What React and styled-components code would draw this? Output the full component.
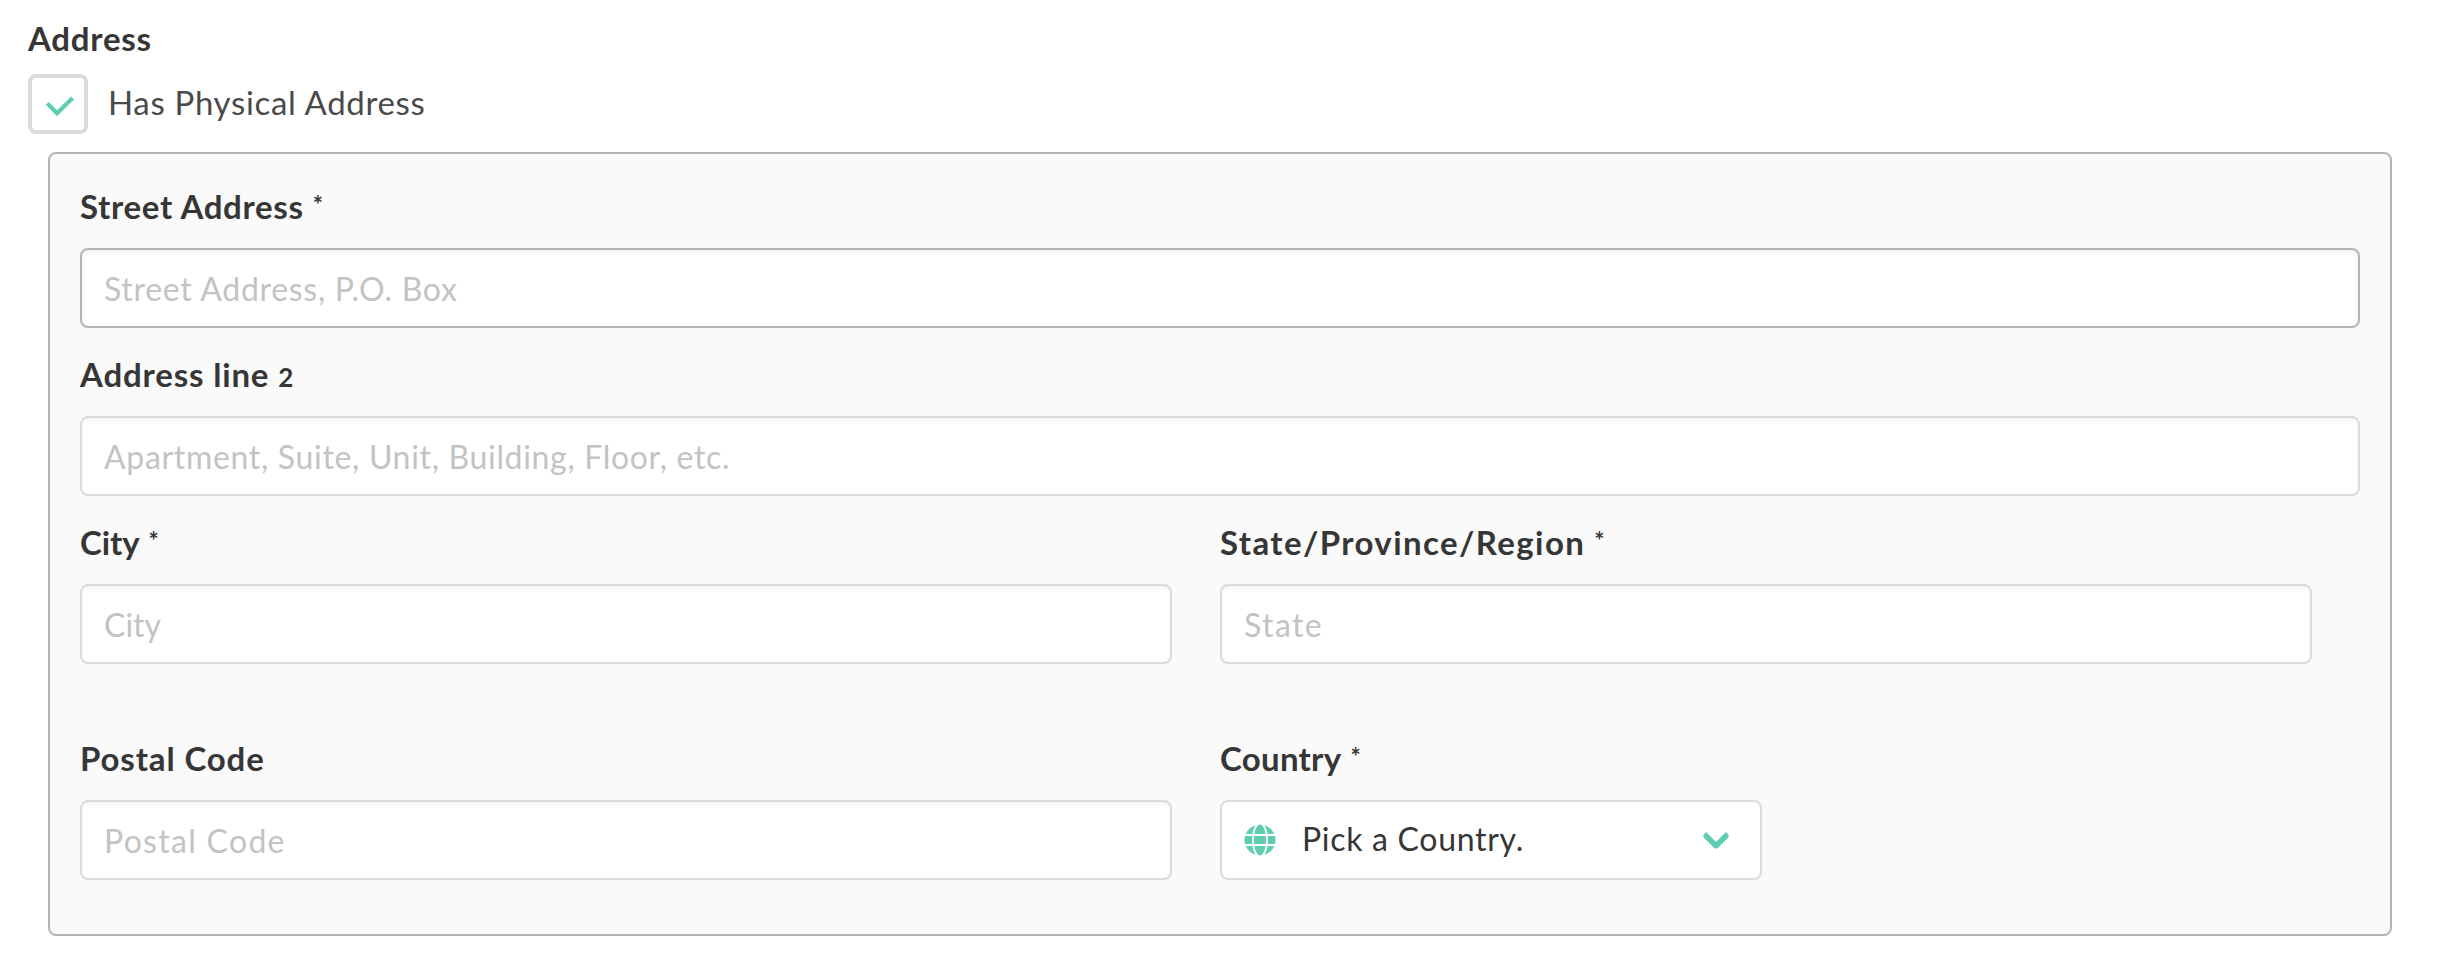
import React from "react";
import styled, { createGlobalStyle } from "styled-components";
import { FaGlobe } from "react-icons/fa";

const GlobalStyle = createGlobalStyle`
  *, *::before, *::after { box-sizing: border-box; }
  body {
    margin: 0;
    background: #fff;
    color: #4a4a4a;
    font-family: Lato, "Open Sans", sans-serif;
    font-size: 32px;
  }
`;

const Form = styled.form`
  padding: 16px 48px 0 28px;
`;

const Label = styled.label`
  display: block;
  height: 48px;
  font-size: 33px;
  line-height: 45px;
  font-weight: 700;
  color: #363636;
  white-space: nowrap;
  letter-spacing: ${({ $track = 0 }) => $track}px;
`;

const Required = styled.span`
  margin-left: 9px;
  font-size: 24px;
  line-height: 0;
  vertical-align: 5px;
`;

const LowNumeral = styled.span`
  font-size: 26px;
  line-height: 0;
`;

const CheckRow = styled.label`
  display: flex;
  align-items: center;
  gap: 20px;
  margin-top: 10px;
  height: 60px;
`;

const CheckBox = styled.span`
  width: 60px;
  height: 60px;
  border: 4px solid #dbdbdb;
  border-radius: 8px;
  background: #fff;

  svg { display: block; }
`;

const CheckText = styled.span`
  padding-bottom: 4px;
  font-size: 33px;
  letter-spacing: 0.67px;
`;

const Panel = styled.section`
  margin: 18px 0 0 20px;
  height: 784px;
  padding: 30px;
  border: 2px solid #b5b5b5;
  border-radius: 8px;
  background: #fafafa;
`;

const Field = styled.div`
  display: flex;
  flex-direction: column;
  gap: 16px;
  margin-bottom: 24px;
`;

const Columns = styled.div`
  display: grid;
  grid-template-columns: 1092px 1092px;
  column-gap: 48px;
  margin-bottom: 48px;
`;

const Input = styled.input`
  width: 100%;
  height: 80px;
  padding: 0 22px;
  border: 2px solid ${({ $active }) => ($active ? "#b5b5b5" : "#dbdbdb")};
  border-radius: 8px;
  outline: none;
  background: #fff;
  box-shadow: inset 0 2px 4px rgba(10, 10, 10, 0.05);
  color: #363636;
  font: inherit;
  letter-spacing: ${({ $track = 0 }) => $track}px;

  &::placeholder {
    color: #c3c3c3;
    opacity: 1;
  }
`;

const Select = styled.div`
  display: flex;
  align-items: center;
  width: 542px;
  height: 80px;
  padding: 0 34px 0 22px;
  border: 2px solid #dbdbdb;
  border-radius: 8px;
  background: #fff;
  color: #363636;

  svg { color: #5dceb2; }
`;

const SelectText = styled.span`
  flex: 1;
  margin-left: 26px;
  padding-bottom: 4px;
  letter-spacing: 0.708px;
`;

const Arrow = styled.span`
  width: 20px;
  height: 20px;
  margin-bottom: 8px;
  border: 6px solid #5dceb2;
  border-top: 0;
  border-right: 0;
  border-radius: 4px;
  transform: rotate(-45deg);
`;

function TextField({ id, label, labelTrack, required, ...input }) {
  return (
    <Field>
      <Label htmlFor={id} $track={labelTrack}>
        {label}
        {required && <Required>*</Required>}
      </Label>
      <Input id={id} type="text" {...input} />
    </Field>
  );
}

export default function App() {
  return (
    <Form>
      <GlobalStyle />
      <Label as="div" $track={0.767}>Address</Label>
      <CheckRow>
        <CheckBox role="checkbox" aria-checked="true">
          <svg width="52" height="52" viewBox="0 0 52 52" fill="none" stroke="#5dceb2" strokeWidth="4.2">
            <path d="M15.3 25.4 25 35.3 40.6 19.9" />
          </svg>
        </CheckBox>
        <CheckText>Has Physical Address</CheckText>
      </CheckRow>

      <Panel>
        <TextField id="street" label="Street Address" labelTrack={0.67} required
          placeholder="Street Address, P.O. Box" $track={0.7} $active />
        <TextField id="line2" label={<>Address line <LowNumeral>2</LowNumeral></>} labelTrack={0.83}
          placeholder="Apartment, Suite, Unit, Building, Floor, etc." $track={0.68} />
        <Columns>
          <TextField id="city" label="City" labelTrack={-0.1} required placeholder="City" />
          <TextField id="state" label="State/Province/Region" labelTrack={1.4} required
            placeholder="State" $track={1.4} />
        </Columns>
        <Columns>
          <TextField id="postal" label="Postal Code" labelTrack={0.86}
            placeholder="Postal Code" $track={1.3} />
          <Field>
            <Label as="div" $track={0.28}>Country<Required>*</Required></Label>
            <Select role="combobox" aria-expanded="false">
              <FaGlobe size={32} />
              <SelectText>Pick a Country.</SelectText>
              <Arrow />
            </Select>
          </Field>
        </Columns>
      </Panel>
    </Form>
  );
}
